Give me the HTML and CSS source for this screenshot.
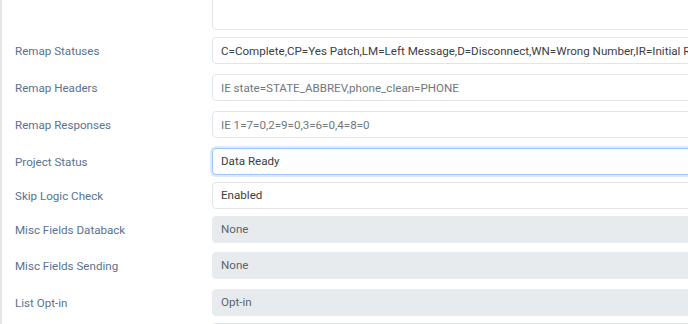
FILE: index.html
```html
<!DOCTYPE html>
<html>
  <head>
    <title>Project Settings</title>
    <link rel="stylesheet" href="styles.css">
  </head>
  <body>
    <div class="panel">
      <form class="settings">
        <div class="row tight">
          <label class="label"></label>
          <textarea class="field area"></textarea>
        </div>
        <div class="row">
          <label class="label">Remap Statuses</label>
          <input class="field" type="text" value="C=Complete,CP=Yes Patch,LM=Left Message,D=Disconnect,WN=Wrong Number,IR=Initial Refusal,FR=Final Refusal">
        </div>
        <div class="row">
          <label class="label">Remap Headers</label>
          <input class="field" type="text" placeholder="IE state=STATE_ABBREV,phone_clean=PHONE">
        </div>
        <div class="row">
          <label class="label">Remap Responses</label>
          <input class="field" type="text" placeholder="IE 1=7=0,2=9=0,3=6=0,4=8=0">
        </div>
        <div class="row tight">
          <label class="label">Project Status</label>
          <div class="field focus">Data Ready</div>
        </div>
        <div class="row tight">
          <label class="label">Skip Logic Check</label>
          <div class="field">Enabled</div>
        </div>
        <div class="row mid">
          <label class="label">Misc Fields Databack</label>
          <div class="field disabled">None</div>
        </div>
        <div class="row">
          <label class="label">Misc Fields Sending</label>
          <div class="field disabled">None</div>
        </div>
        <div class="row tight">
          <label class="label">List Opt-in</label>
          <div class="field disabled">Opt-in</div>
        </div>
        <div class="row">
          <label class="label"></label>
          <div class="field"></div>
        </div>
      </form>
    </div>
  </body>
</html>
```

FILE: styles.css
```css
html, body {
  margin: 0;
  height: 100%;
  overflow: hidden;
  background-color: #ffffff;
}
.panel {
  height: 100%;
  border-left: 2px solid #e4e6e9;
  overflow: hidden;
}
.settings {
  margin-top: -34px;
  font-family: Roboto, "Liberation Sans", sans-serif;
  font-size: 11.6px;
}
.row {
  display: flex;
  align-items: center;
  margin-bottom: 10px;
}
.row.tight {
  margin-bottom: 7px;
}
.row.mid {
  margin-bottom: 9px;
}
.label {
  width: 210px;
  flex: none;
  box-sizing: border-box;
  padding-left: 13px;
  color: #5a7190;
}
.field {
  flex: none;
  width: 620px;
  height: 27px;
  box-sizing: border-box;
  padding: 0 8px;
  border: 1px solid #e1e5ea;
  border-radius: 4px;
  background-color: #ffffff;
  color: #3a4046;
  font-family: inherit;
  font-size: 11.6px;
  line-height: 25px;
  white-space: nowrap;
  overflow: hidden;
  outline: none;
}
.field::placeholder {
  color: #6f767d;
}
.area {
  height: 64px;
  resize: none;
}
.focus {
  border-color: #98c6f7;
  box-shadow: 0 0 0 2px #dcebfc;
}
.disabled {
  background-color: #e8ebee;
  border-color: #e8ebee;
  color: #5d646b;
}
```
